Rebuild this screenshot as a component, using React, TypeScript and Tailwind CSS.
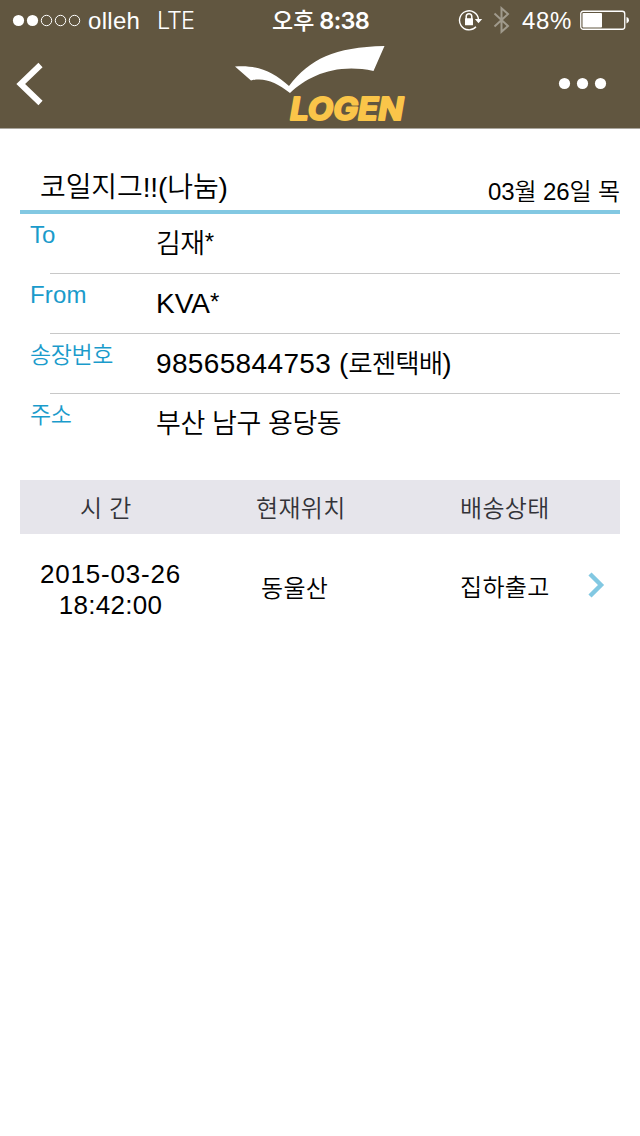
import React from "react";

type DetailRow = { label: string; labelClass: string; value: React.ReactNode };

function Ko({ children }: { children: React.ReactNode }) {
  return <span className="text-[27px] tracking-[-0.5px]">{children}</span>;
}

const star = <span className="relative -top-[3px] text-[24px]">*</span>;

const details: DetailRow[] = [
  { label: "To", labelClass: "text-[24px]", value: <><Ko>김재</Ko>{star}</> },
  { label: "From", labelClass: "text-[24px] tracking-[0.2px]", value: <>KVA{star}</> },
  {
    label: "송장번호",
    labelClass: "text-[23px] tracking-[-0.4px]",
    value: (
      <>
        <span className="tracking-[0.35px]">98565844753</span> (<span className="text-[26.5px] tracking-[-0.9px]">로젠택배</span>)
      </>
    ),
  },
  { label: "주소", labelClass: "text-[23px] tracking-[-0.4px]", value: <span className="text-[27px] tracking-[-0.4px]">부산 남구 용당동</span> },
];

function StatusBar() {
  return (
    <div className="flex h-10 items-center text-[24px] leading-10 text-white">
      <svg className="ml-3 shrink-0" width="70" height="14" viewBox="0 0 70 14">
        <circle cx="6.5" cy="7.5" r="5.6" fill="white" />
        <circle cx="20.5" cy="7.5" r="5.6" fill="white" />
        <g fill="none" stroke="white" strokeWidth="1">
          <circle cx="34.5" cy="7.5" r="5.2" />
          <circle cx="48.5" cy="7.5" r="5.2" />
          <circle cx="62.5" cy="7.5" r="5.2" />
        </g>
      </svg>
      <span className="ml-[6px] w-[69px] pt-[2px] tracking-[0.3px] whitespace-nowrap">olleh</span>
      <span className="w-[115px] pt-px font-['Inter'] text-[23.5px] font-light tracking-[-1px]">LTE</span>
      <span className="flex w-[186px] gap-[5px] pt-px font-medium whitespace-nowrap">
        <span className="text-[23px]">오후</span>
        <span className="font-['Inter'] text-[23.5px] font-semibold tracking-[-0.7px]">8:38</span>
      </span>
      <svg className="shrink-0" width="26" height="24" viewBox="0 0 26 24" fill="none">
        <path d="M18 18.8A9.5 9.5 0 1 1 20.5 11.5" stroke="white" strokeWidth="1.4" />
        <path d="M16.8 11H24.2L20.5 15.3Z" fill="white" />
        <path d="M8.2 11V8.7A2.8 3 0 0 1 13.8 8.7V11" stroke="white" strokeWidth="1.5" />
        <rect x="7" y="10.3" width="8" height="7" rx="0.6" fill="white" />
      </svg>
      <svg className="ml-[9px] shrink-0" width="18" height="28" viewBox="0 0 18 28" fill="none">
        <path d="M1.5 7.5L15 20L8.5 25.8V2.2L15 8L1.5 20.5" stroke="#a09a8c" strokeWidth="2" />
      </svg>
      <span className="ml-[11px] w-[58px] pt-[2px] tracking-[0.7px] whitespace-nowrap">48%</span>
      <svg className="shrink-0" width="50" height="20" viewBox="0 0 50 20" fill="none">
        <rect x="0.75" y="1.25" width="44" height="18" rx="2.5" stroke="white" strokeWidth="1.3" />
        <rect x="2.5" y="3" width="19.5" height="14.5" rx="0.8" fill="white" />
        <path d="M46.5 7Q49 7.5 49 10.3Q49 13 46.5 13.5Z" fill="white" />
      </svg>
    </div>
  );
}

function NavBar() {
  return (
    <div className="flex h-[88px] items-start">
      <svg className="mt-[22px] ml-4 shrink-0" width="28" height="44" viewBox="0 0 28 44">
        <path d="M24.5 3L4.7 22L24.5 41" fill="none" stroke="white" strokeWidth="6" />
      </svg>
      <svg className="ml-[186px] shrink-0" width="180" height="88" viewBox="0 0 180 88">
        <path
          d="M5 26.5C25 24.5 43 31 59 46C80 19 104 7 154.5 6L143.5 31C106 23 78 36 60 53C46 42 34 37 21 40.5Z"
          fill="white"
        />
        <text
          x="60"
          y="80.2"
          textLength="113.5"
          lengthAdjust="spacingAndGlyphs"
          fill="#fac549"
          stroke="#fac549"
          strokeWidth="2"
          strokeLinejoin="round"
          className="font-['Inter'] text-[31.5px] font-bold italic"
        >
          LOGEN
        </text>
      </svg>
      <svg className="mt-[37px] ml-[148px] shrink-0" width="50" height="14" viewBox="0 0 50 14" fill="white">
        <circle cx="6.5" cy="6.5" r="5.6" />
        <circle cx="24.5" cy="6.5" r="5.6" />
        <circle cx="42.5" cy="6.5" r="5.6" />
      </svg>
    </div>
  );
}

export default function App() {
  return (
    <div className="h-[1136px] w-[640px] overflow-hidden bg-white font-['Liberation_Sans','Noto_Sans_CJK_KR',sans-serif] font-[350] text-black">
      <header className="h-[129px] border-b border-[#aaa69e] bg-[#615640]">
        <StatusBar />
        <NavBar />
      </header>
      <main className="px-5">
        <div className="flex h-[85px] items-end justify-between border-b-4 border-[#82c8e2] pl-5">
          <h1 className="h-[40px] text-[28px] leading-[36px] font-[350] tracking-[-0.1px] whitespace-nowrap">코일지그!!(나눔)</h1>
          <span className="h-[34px] text-[24px] leading-[32px] tracking-[-0.1px] whitespace-nowrap">03월 26일 목</span>
        </div>
        <dl>
          {details.map((row, i) => (
            <div key={row.label} className="flex h-[60px]">
              <dt className={`w-[30px] shrink-0 pt-[5px] pl-[10px] leading-8 whitespace-nowrap text-[#1a9bcb] ${row.labelClass}`}>
                {row.label}
              </dt>
              <dd
                className={`w-[570px] border-b pt-3 pl-[106px] text-[28px] leading-9 whitespace-nowrap ${
                  i < details.length - 1 ? "border-[#c8c8c8]" : "border-transparent"
                }`}
              >
                {row.value}
              </dd>
            </div>
          ))}
        </dl>
        <div className="mt-[26px] flex h-[54px] bg-[#e6e5eb] pt-[2px] text-[24px] leading-[54px] tracking-[0.3px] whitespace-nowrap text-[#333338]">
          <span className="w-[236px] pl-[60px]">시 간</span>
          <span className="w-[204px]">현재위치</span>
          <span>배송상태</span>
        </div>
        <div className="flex pt-[25px] text-[26px] leading-[31px] whitespace-nowrap">
          <span className="w-[181px] text-center">
            <span className="tracking-[0.8px]">2015-03-26</span>
            <br />
            <span className="tracking-[0.3px]">18:42:00</span>
          </span>
          <span className="w-[259px] pt-[14px] pl-[60px] text-[24px] tracking-[0.3px]">동울산</span>
          <span className="w-[127px] pt-[13px] text-[24px] tracking-[0.3px]">집하출고</span>
          <svg className="mt-[12px]" width="18" height="28" viewBox="0 0 18 28">
            <path d="M3 3L14 14L3 25" fill="none" stroke="#82c8e2" strokeWidth="4.4" />
          </svg>
        </div>
      </main>
    </div>
  );
}
